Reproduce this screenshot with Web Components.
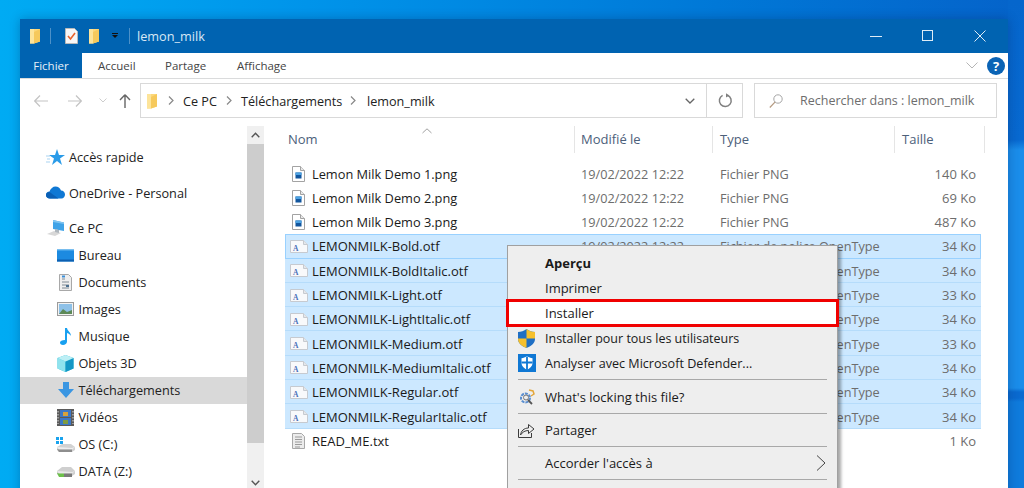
<!DOCTYPE html>
<html lang="fr">
<head>
<meta charset="utf-8">
<title>lemon_milk</title>
<style>
  html, body { margin: 0; height: 488px; overflow: hidden; }
  body { font: 13px "Open Sans", "Noto Sans", sans-serif; }
</style>
</head>
<body>
<win-desktop>
  <explorer-window>
    <title-bar slot="top" label="lemon_milk"></title-bar>
    <ribbon-tabs slot="top"></ribbon-tabs>
    <address-row slot="top"></address-row>

    <side-nav slot="nav">
      <nav-item icon="star" top>Accès rapide</nav-item>
      <nav-item icon="cloud" top gap>OneDrive - Personal</nav-item>
      <nav-item icon="pc" top gap>Ce PC</nav-item>
      <nav-item icon="desktop">Bureau</nav-item>
      <nav-item icon="docs">Documents</nav-item>
      <nav-item icon="pics">Images</nav-item>
      <nav-item icon="note">Musique</nav-item>
      <nav-item icon="cube">Objets 3D</nav-item>
      <nav-item icon="down" selected>Téléchargements</nav-item>
      <nav-item icon="film">Vidéos</nav-item>
      <nav-item icon="osdrive">OS (C:)</nav-item>
      <nav-item icon="datadrive">DATA (Z:)</nav-item>
    </side-nav>

    <file-list slot="files">
      <file-row icon="png" date="19/02/2022 12:22" type="Fichier PNG" size="140 Ko">Lemon Milk Demo 1.png</file-row>
      <file-row icon="png" date="19/02/2022 12:22" type="Fichier PNG" size="69 Ko">Lemon Milk Demo 2.png</file-row>
      <file-row icon="png" date="19/02/2022 12:22" type="Fichier PNG" size="487 Ko">Lemon Milk Demo 3.png</file-row>
      <file-row icon="font" selected focused date="19/02/2022 12:22" type="Fichier de police OpenType" size="34 Ko">LEMONMILK-Bold.otf</file-row>
      <!-- the menu covers the dates of the rows below, so they are left out -->
      <file-row icon="font" selected type="Fichier de police OpenType" size="34 Ko">LEMONMILK-BoldItalic.otf</file-row>
      <file-row icon="font" selected type="Fichier de police OpenType" size="33 Ko">LEMONMILK-Light.otf</file-row>
      <file-row icon="font" selected type="Fichier de police OpenType" size="34 Ko">LEMONMILK-LightItalic.otf</file-row>
      <file-row icon="font" selected type="Fichier de police OpenType" size="33 Ko">LEMONMILK-Medium.otf</file-row>
      <file-row icon="font" selected type="Fichier de police OpenType" size="34 Ko">LEMONMILK-MediumItalic.otf</file-row>
      <file-row icon="font" selected type="Fichier de police OpenType" size="34 Ko">LEMONMILK-Regular.otf</file-row>
      <file-row icon="font" selected type="Fichier de police OpenType" size="34 Ko">LEMONMILK-RegularItalic.otf</file-row>
      <file-row icon="txt" size="1 Ko">READ_ME.txt</file-row>
    </file-list>
  </explorer-window>

  <context-menu>
    <menu-item bold>Aperçu</menu-item>
    <menu-item>Imprimer</menu-item>
    <menu-item marked>Installer</menu-item>
    <menu-item icon="shield" style="font-size:12.500px">Installer pour tous les utilisateurs</menu-item>
    <menu-item icon="defender" style="font-size:12.600px">Analyser avec Microsoft Defender...</menu-item>
    <menu-sep></menu-sep>
    <menu-item icon="lock">What's locking this file?</menu-item>
    <menu-sep></menu-sep>
    <menu-item icon="share">Partager</menu-item>
    <menu-sep></menu-sep>
    <menu-item arrow>Accorder l'accès à</menu-item>
    <menu-sep></menu-sep>
  </context-menu>
</win-desktop>

<script>
const ICONS = {
  folder: [12, 16, `<path d="M1 1h10v12.500L5 15.500H1z" fill="#fcd87a"/><path d="M5 4l6-3v12.500L5 15.500z" fill="#f6c95c"/><path d="M1 1h4v14.500H1z" fill="#fde49a"/>`],
  checklist: [13, 16, `<path d="M.5.5h9l3 3v12H.5z" fill="#f7f7f7" stroke="#b9b9b9"/><path d="M3 8l2.500 3L10 5" fill="none" stroke="#e8632c" stroke-width="1.600"/>`],
  star: [19, 17, `<path d="M11 0l2 6h6l-5 3.600 2 6.400-5-4-5 4 2-6.400L3 6h6z" fill="#2a9be8"/><path d="M0 7h4M1 10h3M0 13h4" stroke="#a9d4f2" stroke-width="1.200"/>`],
  cloud: [19, 13, `<path d="M4 12.500C1.500 12.500 0 11 0 9s1.500-3.500 3.500-3.500C4.500 2.500 7 .5 9.500.5c2.500 0 4.500 1.500 5.500 4 2.500 0 4 2 4 4s-1.500 4-3.500 4z" fill="#0f78d4"/><path d="M4 12.500C1.500 12.500 0 11 0 9s1.500-3 3.500-3l9 6.500z" fill="#0a5fb4"/>`],
  pc: [18, 18, `<path d="M6 1l11 2.500V12L6 10z" fill="#3fa3e8"/><path d="M6 1l11 2.500V5L6 3z" fill="#80c4f0"/><path d="M0 15l7-3 7 2-6 3z" fill="#d8d8d8"/><path d="M8 10l4 1v3l-4-1z" fill="#aeb6bd"/>`],
  desktop: [17, 13, `<rect width="17" height="12" y=".5" fill="#1c8ae0"/><rect y="10.500" width="17" height="2" fill="#0d5fb0"/><rect y=".5" width="17" height="1" fill="#66b7ef"/>`],
  docs: [13, 17, `<path d="M.5.5h9l3 3v13H.5z" fill="#efefef" stroke="#a8a8a8"/><path d="M3 5h3M3 8h7M3 11h7M3 14h7" stroke="#7f8a94"/><path d="M3 2.500h3" stroke="#3a8fd8" stroke-width="2"/><rect x="7" y="11" width="3" height="2" fill="#4b6f8f"/>`],
  pics: [17, 14, `<rect x=".5" y=".5" width="16" height="13" fill="#f2f2f2" stroke="#9b9b9b"/><rect x="2" y="2" width="13" height="10" fill="#8ec1e8"/><path d="M2 12l4-5 4 3 5-2v4z" fill="#5d8a58"/>`],
  note: [12, 17, `<path d="M5 0h2c.3 3 4 4 4 8-1-1.500-2-2.500-4-3v8.500C7 15.500 5 17 3 17s-3-1-3-2.500S2 12 5 12z" fill="#18a0f0"/>`],
  cube: [17, 17, `<path d="M8.500 0l8 3v10.500L8.500 17 .5 13.500V3z" fill="#31c0d8"/><path d="M.5 3l8 3.500V17L.5 13.500z" fill="#8fe3ee"/><path d="M16.500 3l-8 3.500V17l8-3.500z" fill="#1597c5"/><path d="M8.500 0l8 3-8 3.500L.5 3z" fill="#bdeff5"/>`],
  down: [16, 16, `<path d="M5 0h6v7h5l-8 9-8-9h5z" fill="#3a96e2"/>`],
  film: [17, 17, `<rect width="17" height="17" fill="#5a5a5a"/><rect x="3" y="1" width="11" height="7" fill="#3c78c8"/><rect x="3" y="9" width="11" height="7" fill="#3c78c8"/><rect x="6" y="3" width="5" height="4" fill="#d8a23c"/><rect x="6" y="11" width="5" height="4" fill="#7f9c42"/><path d="M1 2v13M16 2v13" stroke="#ddd" stroke-dasharray="1.500 1.500"/>`],
  osdrive: [19, 15, `<path d="M1 10l5-3h9l4 3v3l-3 2H3l-2-2z" fill="#d2d2d2"/><path d="M1 10l15 1 3-1-3 2.500H3z" fill="#eee"/><path d="M1 12l2 3h13v-2.500H3z" fill="#8e8e8e"/><path d="M0 0h3v3H0zM4 0h3v3H4zM0 4h3v3H0zM4 4h3v3H4z" fill="#19a3ee"/>`],
  datadrive: [19, 11, `<path d="M1 5l5-4h9l4 4v3l-3 2H3L1 8z" fill="#cfcfcf"/><path d="M1 5l15 1 3-1-3 2.500H3z" fill="#e9e9e9"/><path d="M1 7l2 4h5v-3.500H3z" fill="#6cc04a"/><path d="M8 7.500h8V11H8z" fill="#7a7a7a"/>`],
  png: [13, 16, `<path d="M.5.5h8l4 4v11H.5z" fill="#fff" stroke="#a3a3a3"/><path d="M8.500.5v4h4" fill="#e8e8e8" stroke="#a3a3a3"/><rect x="3.500" y="6.500" width="6" height="6" fill="#12569e"/><rect x="3.500" y="6.500" width="6" height="2.500" fill="#4da2e2"/>`],
  font: [18, 13, `<path d="M.5.5h13l4 4v8H.5z" fill="#f8f9fb" stroke="#c6cad0"/><path d="M13.500.5v4h4" fill="#e4e7eb" stroke="#c6cad0"/><text x="3" y="11" font-family="Liberation Serif, serif" font-size="7.500" font-weight="bold" fill="#4a6fb8">A</text>`],
  txt: [13, 16, `<path d="M.5.5h9l3 3v12H.5z" fill="#ececec" stroke="#a8a8a8"/><path d="M3 4h7M3 6.500h7M3 9h7M3 11.500h7M3 14h5" stroke="#9a9a9a"/>`],
  shield: [17, 19, `<path d="M8.500 0C11 2 14 3 17 3v7c0 4-4 7.500-8.500 9C4 17.500 0 14 0 10V3c3 0 6-1 8.500-3z" fill="#1f6fc4"/><path d="M8.500 0C11 2 14 3 17 3v6.500H8.500z" fill="#f6c02c"/><path d="M8.500 9.500V19C4 17.500 0 14 0 10v-.5z" fill="#f6c02c"/>`],
  defender: [18, 18, `<rect width="18" height="18" fill="#0f78d4"/><path d="M9 2c2 1.500 3.500 2 5.500 2.200v5c0 2.800-2.500 5-5.500 6.800-3-1.800-5.500-4-5.500-6.800v-5C5.500 4 7 3.500 9 2z" fill="#fff"/><path d="M9 2.500v13.500M3.500 8.500h11" stroke="#0f78d4" stroke-width="1.800"/>`],
  lock: [17, 16, `<circle cx="7.500" cy="9" r="4.500" fill="none" stroke="#5b8fd0" stroke-width="2" stroke-dasharray="3 1"/><circle cx="8" cy="8.500" r="2.500" fill="none" stroke="#777"/><path d="M10 11l4 4" stroke="#555" stroke-width="1.800"/><path d="M11 1l4 1 1 3-3 2" fill="none" stroke="#e3a63a" stroke-width="1.500"/>`],
  share: [17, 17, `<path d="M.5 8v8.500h13V12" fill="none" stroke="#3c3c3c"/><path d="M2.500 14c.5-4 3.500-7 8-7V3.500L16 8l-5.500 4.500V9.500c-3.500 0-6 1.500-8 4.500z" fill="none" stroke="#3c3c3c"/>`]
};

class AppIcon extends HTMLElement {
  connectedCallback() {
    if (this.shadowRoot) return;
    const shadow = this.attachShadow({ mode: "open" });
    const [w, h, body] = ICONS[this.getAttribute("name")] || [1, 1, ""];
    shadow.innerHTML = `<style>:host{display:inline-flex;align-items:center;justify-content:center}svg{display:block}</style>
      <svg width="${w}" height="${h}" viewBox="0 0 ${w} ${h}">${body}</svg>`;
  }
}
customElements.define("app-icon", AppIcon);

// small helper, every element below is just a style + some markup
function shadowOf(el, html) {
  const t = document.createElement("template");
  t.innerHTML = html;
  el.attachShadow({ mode: "open" }).appendChild(t.content.cloneNode(true));
}

class WinDesktop extends HTMLElement {
  constructor() {
    super();
    shadowOf(this, `<style>
      :host {
        display: block; position: relative; width: 1024px; height: 488px; overflow: hidden;
        padding: 19px 16px 0 20px; box-sizing: border-box;
        background:
          linear-gradient(180deg, #0566cc 0, #0869d0 140px, #1a8dea 150px, #1a8dea 388px, #0a6ad0 392px, #0a6ad0 398px, #0f7bdc 402px) right top / 16px 100% no-repeat,
          linear-gradient(90deg, #00abf3 0, #0094ea 30%, #0078d7 70%, #0563ca 100%);
      }
    </style><slot></slot>`);
  }
}
customElements.define("win-desktop", WinDesktop);

class ExplorerWindow extends HTMLElement {
  constructor() {
    super();
    shadowOf(this, `<style>
      :host {
        display: block; height: 480px; background: #fff; color: #1a1a1a;
        box-shadow: 0 0 10px rgba(0,30,80,.3);
      }
      .main { display: flex; height: 363px; }
    </style>
    <slot name="top"></slot>
    <div class="main"><slot name="nav"></slot><slot name="files"></slot></div>`);
  }
}
customElements.define("explorer-window", ExplorerWindow);

class TitleBar extends HTMLElement {
  constructor() {
    super();
    shadowOf(this, `<style>
      :host {
        display: flex; align-items: center; height: 34px; background: #0063b1; color: #d9e8f5;
        font-size: 12.700px; padding: 0 2px 0 9px; box-sizing: border-box;
      }
      .sep { width: 1px; height: 16px; background: #4d91c8; }
      .drop { width: 7px; height: 7px; display: flex; flex-direction: column; align-items: center; }
      .drop i { width: 6px; height: 1px; background: #111; margin-bottom: 1px; }
      .drop b { border: 3px solid transparent; border-top-color: #111; border-bottom: 0; }
      .name { margin-left: 7px; flex: 1; }
      .btn { width: 52px; display: flex; justify-content: center; }
      svg { display: block; }
    </style>
    <app-icon name="folder"></app-icon>
    <span class="sep" style="margin-left:9px"></span>
    <app-icon name="checklist" style="margin-left:14px"></app-icon>
    <app-icon name="folder" style="margin-left:10px"></app-icon>
    <span class="drop" style="margin-left:11px"><i></i><b></b></span>
    <span class="sep" style="margin-left:11px"></span>
    <span class="name">${this.getAttribute("label") || ""}</span>
    <span class="btn"><svg width="12" height="12"><path d="M0 6.500h12" stroke="#dfecf6"/></svg></span>
    <span class="btn"><svg width="12" height="12"><rect x=".5" y=".5" width="10" height="10" fill="none" stroke="#dfecf6"/></svg></span>
    <span class="btn"><svg width="12" height="12"><path d="M.5.5l11 11M11.500.5l-11 11" stroke="#dfecf6"/></svg></span>`);
  }
}
customElements.define("title-bar", TitleBar);

class RibbonTabs extends HTMLElement {
  constructor() {
    super();
    shadowOf(this, `<style>
      :host {
        display: flex; align-items: center; height: 26px; background: #fff; font-size: 11.500px; color: #444;
        border-bottom: 1px solid #dadbdc; box-sizing: border-box;
      }
      .file { background: #0063b1; color: #e6f0f8; width: 62px; height: 25px; display: flex; align-items: center; justify-content: center; }
      .tab { margin-left: 16px; width: 51px; }
      .fill { flex: 1; }
      svg { display: block; }
      .help {
        width: 18px; height: 18px; border-radius: 50%; background: #0a63b5; color: #fff; font-weight: 700; font-size: 13px;
        display: flex; align-items: center; justify-content: center; margin: 0 3px 0 9px;
      }
    </style>
    <span class="file">Fichier</span>
    <span class="tab">Accueil</span>
    <span class="tab" style="width:56px">Partage</span>
    <span class="tab">Affichage</span>
    <span class="fill"></span>
    <svg width="12" height="7"><path d="M.5.5L6 6l5.500-5.500" fill="none" stroke="#b5b5b5"/></svg>
    <span class="help">?</span>`);
  }
}
customElements.define("ribbon-tabs", RibbonTabs);

class AddressRow extends HTMLElement {
  constructor() {
    super();
    shadowOf(this, `<style>
      :host {
        display: flex; align-items: flex-start; height: 47px; padding: 4px 11px 0 0; box-sizing: border-box;
        font-size: 12.650px; color: #222;
      }
      svg { display: block; }
      .nav { display: flex; align-items: center; width: 120px; height: 35px; padding-left: 14px; box-sizing: border-box; }
      .box { display: flex; align-items: center; height: 35px; border: 1px solid #d9d9d9; box-sizing: border-box; }
      .path { width: 603px; }
      .path app-icon { margin: 0 10px 0 5px; }
      .path em { font-style: normal; }
      .path svg.c { margin: 0 9px 0 0; }
      .drop { margin-left: auto; width: 36px; height: 100%; padding-left: 4px; box-sizing: border-box; display: flex; align-items: center; justify-content: center; }
      .refresh { width: 36px; height: 100%; border-left: 1px solid #d9d9d9; display: flex; align-items: center; justify-content: center; box-sizing: border-box; padding-left: 2px; }
      .search { width: 243px; margin-left: 11px; color: #6d6d6d; font-size: 12.500px; }
      .search svg { margin: 0 17px 0 14px; }
    </style>
    <div class="nav">
      <svg width="14" height="12"><path d="M6 .5L.7 6 6 11.500M1 6h13" fill="none" stroke="#c4c4c4" stroke-width="1.200"/></svg>
      <svg width="14" height="12" style="margin-left:20px"><path d="M8 .5L13.300 6 8 11.500M0 6h13" fill="none" stroke="#c4c4c4" stroke-width="1.200"/></svg>
      <svg width="8" height="5" style="margin-left:17px"><path d="M.5.5L4 4 7.500.5" fill="none" stroke="#cdcdcd"/></svg>
      <svg width="12" height="14" style="margin-left:12px"><path d="M6 .8L1 6M6 .8L11 6M6 1v13" fill="none" stroke="#666" stroke-width="1.400"/></svg>
    </div>
    <div class="box path">
      <app-icon name="folder"></app-icon>
      <svg class="c" width="6" height="9"><path d="M1 .5L5 4.500 1 8.500" fill="none" stroke="#888" stroke-width="1.200"/></svg>
      <em style="width:43px">Ce PC</em>
      <svg class="c" width="6" height="9"><path d="M1 .5L5 4.500 1 8.500" fill="none" stroke="#888" stroke-width="1.200"/></svg>
      <em style="width:109px">Téléchargements</em>
      <svg class="c" width="6" height="9"><path d="M1 .5L5 4.500 1 8.500" fill="none" stroke="#888" stroke-width="1.200"/></svg>
      <em style="margin-left:2px">lemon_milk</em>
      <span class="drop"><svg width="10" height="6"><path d="M.7.7L5 5 9.300.7" fill="none" stroke="#666" stroke-width="1.300"/></svg></span>
      <span class="refresh"><svg width="15" height="15" viewBox="0 0 15 15"><path d="M9.500 2.200A5.900 5.900 0 1 1 4.600 2.400" fill="none" stroke="#808080" stroke-width="1.500"/><path d="M8 .2v4.300l3.300-2.100z" fill="#808080"/></svg></span>
    </div>
    <div class="box search">
      <svg width="14" height="14"><circle cx="9" cy="5" r="4.200" fill="none" stroke="#a5a5a5"/><path d="M6 8.200L.8 13.500" stroke="#b59a80" stroke-width="1.200"/></svg>
      <span>Rechercher dans : lemon_milk</span>
    </div>`);
  }
}
customElements.define("address-row", AddressRow);

class SideNav extends HTMLElement {
  constructor() {
    super();
    shadowOf(this, `<style>
      :host { display: flex; width: 244px; height: 100%; flex: none; }
      .list { width: 227px; padding-top: 17.500px; box-sizing: border-box; }
      .bar { width: 17px; background: #f0f0f0; display: flex; flex-direction: column; align-items: center; }
      .thumb { background: #cdcdcd; width: 17px; height: 299px; flex: none; }
      .arrow { height: 18px; display: flex; align-items: center; justify-content: center; flex: none; }
      .track { flex: 1; width: 17px; }
      svg { display: block; }
    </style>
    <div class="list"><slot></slot></div>
    <div class="bar">
      <span class="arrow"><svg width="9" height="6"><path d="M.7 5.300L4.500 1.300 8.300 5.300" fill="none" stroke="#555" stroke-width="1.400"/></svg></span>
      <div class="thumb"></div>
      <div class="track"></div>
      <span class="arrow" style="height:12px"><svg width="9" height="6"><path d="M.7.7L4.500 4.700 8.300.7" fill="none" stroke="#555" stroke-width="1.400"/></svg></span>
    </div>`);
  }
}
customElements.define("side-nav", SideNav);

class NavItem extends HTMLElement {
  constructor() {
    super();
    const top = this.hasAttribute("top");
    shadowOf(this, `<style>
      :host {
        display: flex; align-items: center; height: 27px; font-size: 12.700px; color: #222; box-sizing: border-box;
      }
      :host([gap]) { margin-top: 8.500px; }
      :host([selected]) { background: #d9d9d9; }
      .ic { width: 19px; margin-left: ${top ? 26 : 36}px; margin-right: ${top ? 4 : 3.500}px; display: flex; justify-content: center; flex: none; }
    </style>
    <span class="ic"><app-icon name="${this.getAttribute("icon")}"></app-icon></span><slot></slot>`);
  }
}
customElements.define("nav-item", NavItem);

class FileList extends HTMLElement {
  constructor() {
    super();
    shadowOf(this, `<style>
      :host { display: block; flex: 1; padding-left: 21px; box-sizing: border-box; font-size: 13px; }
      .head { display: flex; height: 27px; color: #4c607a; position: relative; }
      .col { display: flex; align-items: center; padding-bottom: 2px; border-right: 1px solid #e5e5e5; box-sizing: border-box; height: 27px; }
      .sort { position: absolute; left: 137px; top: 2px; }
      .rows { padding-top: 8.400px; }
    </style>
    <div class="head">
      <svg class="sort" width="10" height="6"><path d="M.5 5L5 .8 9.500 5" fill="none" stroke="#a0a0a0"/></svg>
      <span class="col" style="width:290px;padding-left:3px">Nom</span>
      <span class="col" style="width:138px;padding-left:6px">Modifié le</span>
      <span class="col" style="width:182px;padding-left:7px">Type</span>
      <span class="col" style="width:90px;padding-left:7px">Taille</span>
    </div>
    <div class="rows"><slot></slot></div>`);
  }
}
customElements.define("file-list", FileList);

class FileRow extends HTMLElement {
  constructor() {
    super();
    shadowOf(this, `<style>
      :host {
        display: grid; grid-template-columns: 296px 139px 182px 1fr; align-items: center; width: 696px; height: 24.300px;
        box-sizing: border-box; font-size: 12.700px; color: #6d6d6d;
      }
      :host([selected]) { background: #cce8ff; box-shadow: inset 0 -1px 0 #b5dcfb; }
      :host([focused]) { box-shadow: inset 0 0 0 1px #99d1ff; }
      .name { display: flex; align-items: center; color: #1a1a1a; height: 100%; font-size: 13px; }
      :host([icon="png"]) .name { font-size: 12.800px; }
      .ic { width: 27px; display: flex; justify-content: center; flex: none; }
      .size { text-align: right; padding-right: 5px; font-size: 13px; }
    </style>
    <span class="name"><span class="ic"><app-icon name="${this.getAttribute("icon")}"></app-icon></span><slot></slot></span>
    <span>${this.getAttribute("date") || ""}</span>
    <span>${this.getAttribute("type") || ""}</span>
    <span class="size">${this.getAttribute("size")}</span>`);
  }
}
customElements.define("file-row", FileRow);

class ContextMenu extends HTMLElement {
  constructor() {
    super();
    shadowOf(this, `<style>
      :host {
        position: absolute; left: 507px; top: 245px; width: 331px; height: 260px; background: #eee; box-sizing: border-box;
        border: 1px solid #a0a0a0; padding-top: 4px; font-size: 13px; color: #1a1a1a;
        box-shadow: 3px 3px 3px rgba(0,0,0,.35);
      }
    </style><slot></slot>`);
  }
}
customElements.define("context-menu", ContextMenu);

class MenuItem extends HTMLElement {
  constructor() {
    super();
    const icon = this.getAttribute("icon");
    shadowOf(this, `<style>
      :host { display: flex; align-items: center; height: 25.200px; box-sizing: border-box; position: relative; }
      :host([bold]) { font-weight: 700; }
      .ic { width: 37px; padding-left: 10px; box-sizing: border-box; display: flex; flex: none; }
      .box { position: absolute; top: -1px; bottom: -1px; left: -2px; width: 333px; background: #fff; border: 3px solid #f00000; box-sizing: border-box; }
      .label { position: relative; }
      svg { position: absolute; right: 11px; }
    </style>
    ${this.hasAttribute("marked") ? `<span class="box"></span>` : ""}
    <span class="ic">${icon ? `<app-icon name="${icon}"></app-icon>` : ""}</span>
    <span class="label"><slot></slot></span>
    ${this.hasAttribute("arrow") ? `<svg width="10" height="16"><path d="M1 .5L9 8 1 15.500" fill="none" stroke="#444"/></svg>` : ""}`);
  }
}
customElements.define("menu-item", MenuItem);

class MenuSep extends HTMLElement {
  constructor() {
    super();
    shadowOf(this, `<style>
      :host { display: block; height: 1px; margin: 3.500px 10px; background: #a8a8a8; }
    </style>`);
  }
}
customElements.define("menu-sep", MenuSep);
</script>
</body>
</html>
